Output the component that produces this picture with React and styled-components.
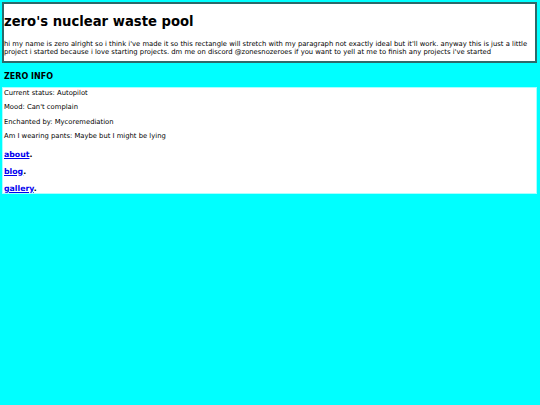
import React from "react";
import styled, { createGlobalStyle } from "styled-components";

const Global = createGlobalStyle`
  html, body { margin: 0; padding: 0; background: #00ffff; }
  body { font-family: "DejaVu Sans", Verdana, sans-serif; color: #000; }
`;

const Page = styled.div`
  padding: 2px 3px 0 2px;
`;

const Header = styled.header`
  background: #fff;
  border: 2px solid #2c6a6a;
  padding: 0 0 5px;
`;

const Title = styled.h1`
  font-size: 13.2px;
  font-weight: bold;
  margin: 10px 0 10px;
  line-height: 16px;
`;

const Intro = styled.p`
  font-size: 6.8px;
  line-height: 8px;
  margin: 0;
`;

const SectionTitle = styled.h3`
  font-size: 8px;
  font-weight: bold;
  margin: 9px 2px 5px;
  line-height: 10px;
`;

const InfoBox = styled.section`
  background: #fff;
  border: 1px solid #aaffff;
  padding: 1px 1px 0;
  display: flex;
  flex-direction: column;
`;

const InfoLine = styled.p`
  font-size: 6.8px;
  line-height: 8px;
  margin: 0 0 6.3px;
`;

const Nav = styled.nav`
  display: flex;
  flex-direction: column;
  gap: 8px;
  margin-top: 3.5px;
`;

const NavLine = styled.p`
  font-size: 7.8px;
  font-weight: bold;
  line-height: 9px;
  margin: 0;
`;

const NavLink = styled.a`
  color: #0000ee;
  text-decoration: underline;
`;

const info = [
  "Current status: Autopilot",
  "Mood: Can't complain",
  "Enchanted by: Mycoremediation",
  "Am I wearing pants: Maybe but I might be lying",
];

const links = ["about", "blog", "gallery"];

export default function App() {
  return (
    <>
      <Global />
      <Page>
        <Header>
          <Title>zero's nuclear waste pool</Title>
          <Intro>
            hi my name is zero alright so i think i've made it so this rectangle will stretch with my paragraph not exactly ideal but it'll work. anyway this is just a little project i started because i love starting projects. dm me on discord @zonesnozeroes if you want to yell at me to finish any projects i've started
          </Intro>
        </Header>
        <SectionTitle>ZERO INFO</SectionTitle>
        <InfoBox>
          {info.map((t) => (
            <InfoLine key={t}>{t}</InfoLine>
          ))}
          <Nav>
            {links.map((l) => (
              <NavLine key={l}>
                <NavLink href="#">{l}</NavLink>.
              </NavLine>
            ))}
          </Nav>
        </InfoBox>
      </Page>
    </>
  );
}
